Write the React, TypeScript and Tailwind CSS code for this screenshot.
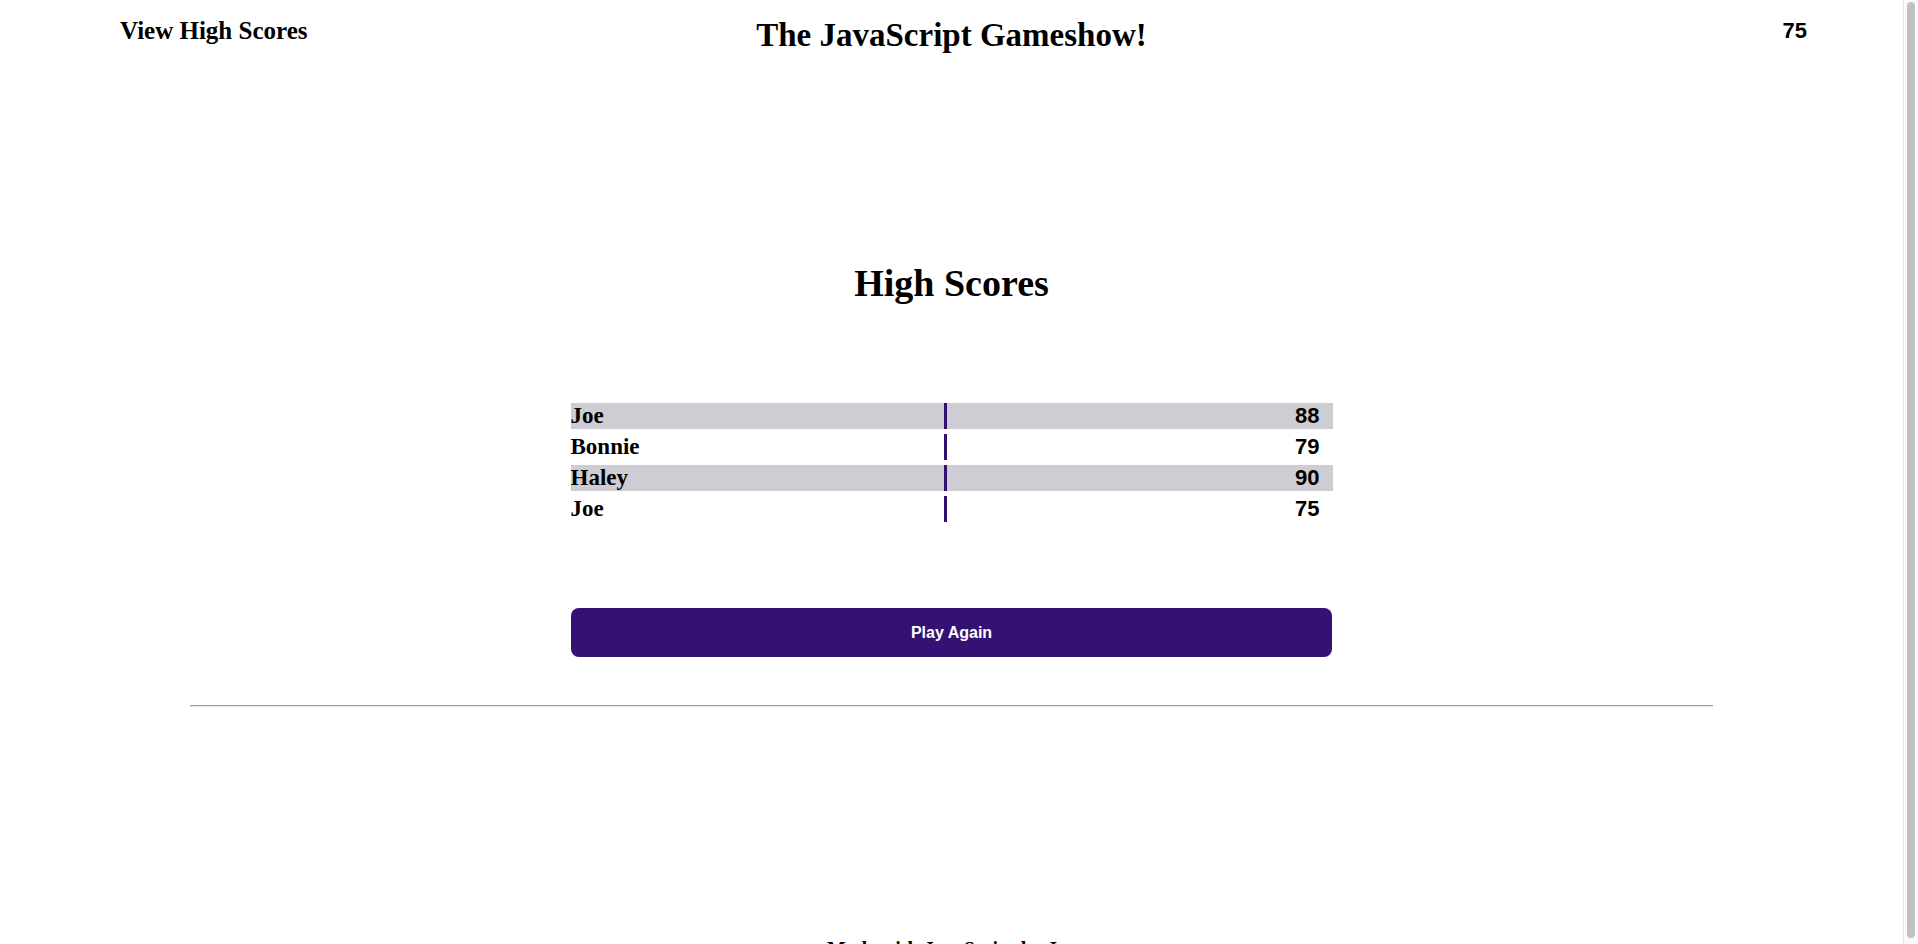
const scores = [
  { name: "Joe", score: 88 },
  { name: "Bonnie", score: 79 },
  { name: "Haley", score: 90 },
  { name: "Joe", score: 75 },
];

function Header() {
  return (
    <header className="grid grid-cols-3 items-start pt-[16px]">
      <a className="ml-[120px] mt-[1px] text-[25px] leading-[28px] font-bold cursor-pointer whitespace-nowrap">
        View High Scores
      </a>
      <h1 className="justify-self-center text-[33px] leading-[38px] font-bold whitespace-nowrap">
        The JavaScript Gameshow!
      </h1>
      <div className="justify-self-end mr-[96px] mt-[2px] font-['Liberation_Sans',Arial,sans-serif] text-[22px] leading-[26px] font-bold">
        75
      </div>
    </header>
  );
}

function ScoreTable() {
  return (
    <div className="mx-auto mt-[99px] flex w-[762px] flex-col gap-[5px]">
      {scores.map((s, i) => (
        <div
          key={i}
          className={`flex h-[26px] items-stretch ${i % 2 === 0 ? "bg-[#cecdd3]" : "bg-white"}`}
        >
          <div className="w-[373px] text-[23px] leading-[26px] font-bold">{s.name}</div>
          <div className="flex-1 border-l-[3px] border-[#33126f] pr-[13px] text-right font-['Liberation_Sans',Arial,sans-serif] text-[22px] leading-[26px] font-bold">
            {s.score}
          </div>
        </div>
      ))}
    </div>
  );
}

// page scroll track on the right edge
function ScrollTrack() {
  return (
    <div className="flex w-[15px] shrink-0 justify-center border-l border-[#e8e8e8] bg-[#fafafa] pt-[2px]">
      <div className="h-[936px] w-[8px] rounded-full bg-[#c1c1c1]" />
    </div>
  );
}

export default function App() {
  return (
    <div className="flex h-[944px] overflow-hidden bg-white font-['Liberation_Serif','Times_New_Roman',serif] text-black">
      <div className="w-[1903px] shrink-0">
        <Header />
        <main className="flex flex-col">
          <h2 className="mt-[208px] text-center text-[38px] leading-[42px] font-bold">High Scores</h2>
          <ScoreTable />
          <button className="mx-auto mt-[86px] h-[49px] w-[761px] rounded-lg bg-[#331273] font-['Liberation_Sans',Arial,sans-serif] text-[16px] font-bold text-white">
            Play Again
          </button>
          <hr className="mx-auto mt-[48px] w-[80%] border-t border-b border-t-[#a0a0a0] border-b-[#e6e6e6]" />
        </main>
        <footer className="mt-[230px] text-center text-[20px] leading-[24px] font-bold">
          Made with JavaScript by Joe
        </footer>
      </div>
      <ScrollTrack />
    </div>
  );
}
